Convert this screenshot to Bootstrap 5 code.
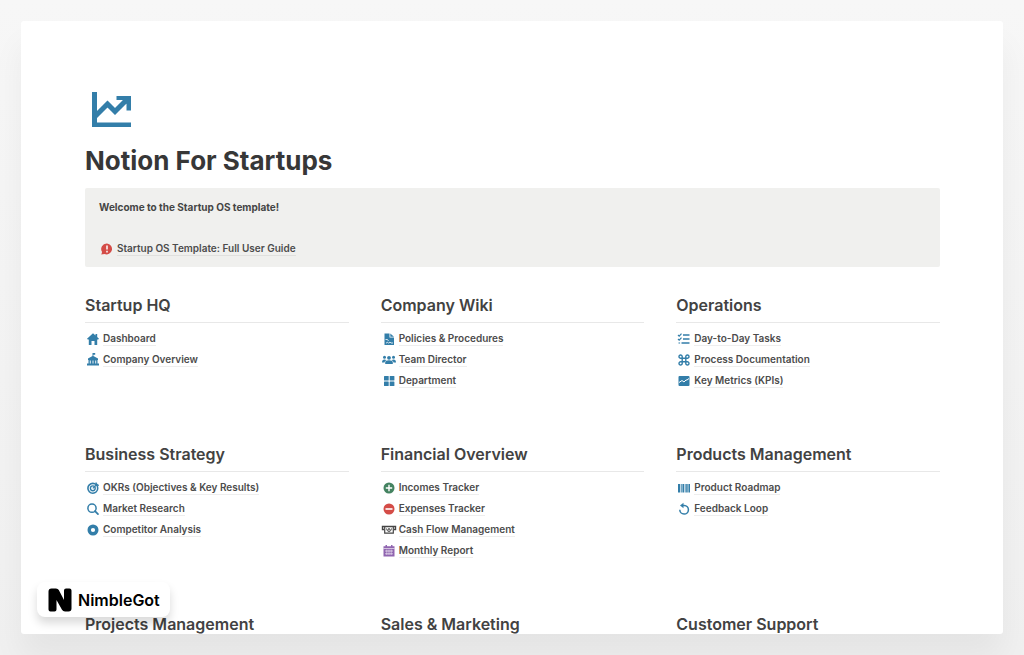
<!DOCTYPE html>
<html lang="en">
<head>
<meta charset="utf-8">
<meta name="viewport" content="width=device-width, initial-scale=1">
<title>Notion For Startups</title>
<link href="https://cdn.jsdelivr.net/npm/bootstrap@5.3.0/dist/css/bootstrap.min.css" rel="stylesheet">
<style>
  body { font-family: Inter, "Liberation Sans", sans-serif; color: #373737; background: linear-gradient(#f7f7f7, #f0f0f0); padding: 21px; }
  .sheet { border-radius: 3px; padding: 64px 63px 0 64px; box-shadow: 0 24px 32px rgba(0,0,0,.05); min-height: 0; }
  .page-icon { width: 48px; height: 48px; margin-bottom: 10px; }
  .page-title { font-size: 26px; line-height: 36px; font-weight: 700; margin-bottom: 9px; }
  .callout { background: #f0f0ee; padding: 9px 14px 8px; margin-bottom: 26px; border-radius: 2px; }
  .callout p { font-size: 10px; line-height: 21px; font-weight: 700; margin-bottom: 20px; color: #454545; }
  .sections { --bs-gutter-x: 32px; row-gap: 51px; }
  .section-title { font-size: 16px; line-height: 24px; font-weight: 600; color: #424242; padding-bottom: 5px; margin-bottom: 5px; border-bottom: 1px solid #e8e8e8; }
  .page-link-row { height: 21px; font-size: 10px; line-height: 14px; font-weight: 600; gap: 2px; }
  .page-link-row a { color: #4c4c4c; text-decoration: none; border-bottom: 1px solid #eeeeee; }
  .callout .page-link-row a { border-color: #e0e0de; }
  .page-link-row svg { width: 16px; height: 14px; color: #337ea9; }
  .brand-tag { left: 37px; bottom: 38px; height: 35px; padding: 0 10px 0 11px; gap: 6px; border-radius: 8px; color: #000; font-size: 16px; line-height: 24px; font-weight: 600; box-shadow: 0 6px 10px rgba(0,0,0,.15); }
  .brand-tag svg { width: 24px; height: 24px; }
</style>
</head>
<body class="vh-100 overflow-hidden d-flex flex-column">
<main class="sheet bg-white flex-fill overflow-hidden">
  <svg class="page-icon d-block" viewBox="0 0 48 48" fill="#337ea9" aria-hidden="true">
    <path d="M7 7h5v30.500h34V42H7z"/>
    <path d="M9.500 32 22.500 19 30 26.500 43 13.500" fill="none" stroke="#337ea9" stroke-width="5"/>
    <path d="M31.500 11H46v14.500h-4.500V19l-4-4h-6z"/>
  </svg>
  <h1 class="page-title">Notion For Startups</h1>
  <div class="callout">
    <p>Welcome to the Startup OS template!</p>
    <div class="page-link-row d-flex align-items-center">
      <svg viewBox="0 0 16 14"><path d="M8 1.500a5.500 5.500 0 1 1-2.500 10.600L2.300 12.600l.8-2.600A5.500 5.500 0 0 1 8 1.500z" fill="#d44c47"/><path d="M8 3.500v4M8 8.800v1.600" stroke="#fff" stroke-width="1.500"/></svg>
      <a href="#">Startup OS Template: Full User Guide</a>
    </div>
  </div>
  <div class="sections row row-cols-3">
    <section>
      <h2 class="section-title">Startup HQ</h2>
      <ul class="list-unstyled mb-0">
        <li class="page-link-row d-flex align-items-center"><svg viewBox="0 0 16 14" fill="currentColor"><path d="M8 1.300 10.500 3.500V2h1.700v3L14 6.700l-.8.900h-1V13H9.500V9h-3v4H3.800V7.600h-1L2 6.700z"/></svg><a href="#">Dashboard</a></li>
        <li class="page-link-row d-flex align-items-center"><svg viewBox="0 0 16 14" fill="currentColor"><path d="M7.500 0h2.700v1.700H8.400v1.200l4.600 2.600V7h-.5v3.500H14v2H2v-2h1.500V7H3V5.500l4.500-2.600z"/><path d="M5.300 7.500v3M8 7.500v3M10.700 7.500v3" stroke="#fff" stroke-width=".9"/></svg><a href="#">Company Overview</a></li>
      </ul>
    </section>
    <section>
      <h2 class="section-title">Company Wiki</h2>
      <ul class="list-unstyled mb-0">
        <li class="page-link-row d-flex align-items-center"><svg viewBox="0 0 16 14" fill="currentColor"><path d="M3.500 1.500h5v4H13V13H3.500z"/><path d="M9.300 1.500 13 4.800H9.300z"/><path d="M4.500 7.500h2l1 1.500M5 11.200l1.500-1 1 1 1.500-1.200 1 1h2" fill="none" stroke="#fff" stroke-width=".8"/></svg><a href="#">Policies &amp; Procedures</a></li>
        <li class="page-link-row d-flex align-items-center"><svg viewBox="0 0 16 14" fill="currentColor"><circle cx="3.500" cy="4.300" r="1.500"/><circle cx="12.500" cy="4.300" r="1.500"/><circle cx="8" cy="4.800" r="1.900"/><path d="M4.200 11V9.500Q4.200 7.300 8 7.300t3.800 2.200V11zM1 9.500Q1 6.600 3.500 6.600q1.200 0 1.700.6-1.600.8-1.700 2.300zM15 9.500q0-2.900-2.500-2.900-1.200 0-1.700.6 1.600.8 1.700 2.300z"/></svg><a href="#">Team Director</a></li>
        <li class="page-link-row d-flex align-items-center"><svg viewBox="0 0 16 14" fill="currentColor"><rect x="3" y="2" width="4.700" height="4.500" rx=".5"/><rect x="8.700" y="2" width="4.700" height="4.500" rx=".5"/><rect x="3" y="7.500" width="4.700" height="4.500" rx=".5"/><rect x="8.700" y="7.500" width="4.700" height="4.500" rx=".5"/></svg><a href="#">Department</a></li>
      </ul>
    </section>
    <section>
      <h2 class="section-title">Operations</h2>
      <ul class="list-unstyled mb-0">
        <li class="page-link-row d-flex align-items-center"><svg viewBox="0 0 16 14" fill="none" stroke="currentColor"><path d="M7 3h6.500M7 7h6.500M5.500 11h8" stroke-width="1.400"/><path d="m2 3 1.200 1.200 2.300-2.600M2 7l1.200 1.200 2.300-2.600M2.500 11h1.600" stroke-width="1.200"/></svg><a href="#">Day-to-Day Tasks</a></li>
        <li class="page-link-row d-flex align-items-center"><svg viewBox="0 0 16 14" fill="none" stroke="currentColor" stroke-width="1.400"><path d="M6.200 5.200h3.600v3.600H6.200zM6.200 5.200H4.700a1.600 1.600 0 1 1 1.500-1.600zM9.800 5.200h1.500a1.600 1.600 0 1 0-1.500-1.600zM6.200 8.800H4.700a1.600 1.600 0 1 0 1.500 1.600zM9.800 8.800h1.500a1.600 1.600 0 1 1-1.500 1.600z"/></svg><a href="#">Process Documentation</a></li>
        <li class="page-link-row d-flex align-items-center"><svg viewBox="0 0 16 14"><rect x="2.500" y="2" width="11" height="10" rx="1" fill="currentColor"/><path d="m3 8.500 3-2 2 1.500 2-2h1l2-1.500" fill="none" stroke="#fff"/></svg><a href="#">Key Metrics (KPIs)</a></li>
      </ul>
    </section>
    <section>
      <h2 class="section-title">Business Strategy</h2>
      <ul class="list-unstyled mb-0">
        <li class="page-link-row d-flex align-items-center"><svg viewBox="0 0 16 14" fill="none" stroke="currentColor"><circle cx="7.800" cy="7.300" r="4.900" stroke-width="1.600"/><circle cx="7.800" cy="7.300" r="2.400" stroke-width="1.400"/><path d="m7.800 7.300 4-4" stroke-width="1.200"/><path d="m11 1.500.3 2.500 2.500.3" fill="currentColor" stroke-width="1.200"/></svg><a href="#">OKRs (Objectives &amp; Key Results)</a></li>
        <li class="page-link-row d-flex align-items-center"><svg viewBox="0 0 16 14" fill="none" stroke="currentColor"><circle cx="7" cy="6.200" r="4.100" stroke-width="1.500"/><path d="m10 9.200 3 3" stroke-width="1.700" stroke-linecap="round"/></svg><a href="#">Market Research</a></li>
        <li class="page-link-row d-flex align-items-center"><svg viewBox="0 0 16 14" fill="none" stroke="currentColor"><circle cx="8" cy="7" r="3.800" stroke-width="3.400"/></svg><a href="#">Competitor Analysis</a></li>
      </ul>
    </section>
    <section>
      <h2 class="section-title">Financial Overview</h2>
      <ul class="list-unstyled mb-0">
        <li class="page-link-row d-flex align-items-center"><svg viewBox="0 0 16 14"><circle cx="8" cy="7" r="5.500" fill="#448361"/><path d="M4.800 7h6.400M8 3.800v6.400" stroke="#fff" stroke-width="1.400"/></svg><a href="#">Incomes Tracker</a></li>
        <li class="page-link-row d-flex align-items-center"><svg viewBox="0 0 16 14"><circle cx="8" cy="7" r="5.500" fill="#d44c47"/><path d="M4.500 7h7" stroke="#fff" stroke-width="1.600"/></svg><a href="#">Expenses Tracker</a></li>
        <li class="page-link-row d-flex align-items-center"><svg viewBox="0 0 16 14" fill="none" stroke="#454545"><path d="M3 6.500H1.500v-3h13v3H13" stroke-width="1.400"/><path d="M3.700 4v6.200h8.600V4" stroke-width="1.200"/><path d="M5.500 5.500Q6 8.500 8 8.500t2.500-3"/><circle cx="8" cy="6.300" r=".8"/></svg><a href="#">Cash Flow Management</a></li>
        <li class="page-link-row d-flex align-items-center"><svg viewBox="0 0 16 14"><path d="M4.500 1h1.500v1.200h4V1h1.500v1.200h2V12.500h-11V2.200h2z" fill="#9065b0"/><path d="M2.500 4.500h11M4 7h8M4 9.800h8" stroke="#fff" stroke-width=".6"/><path d="M5.800 5.500v5.500M8 5.500v5.500M10.200 5.500v5.500" stroke="#fff" stroke-width=".5"/></svg><a href="#">Monthly Report</a></li>
      </ul>
    </section>
    <section>
      <h2 class="section-title">Products Management</h2>
      <ul class="list-unstyled mb-0">
        <li class="page-link-row d-flex align-items-center"><svg viewBox="0 0 16 14" fill="currentColor"><path d="M2 3h2v8.500H2zM4.700 3h1v8.500h-1zM6.400 3h1.600v8.500H6.400zM8.700 3h.9v8.500h-.9zM10.200 3h1.500v8.500h-1.500zM12.400 3H14v8.500h-1.600z"/></svg><a href="#">Product Roadmap</a></li>
        <li class="page-link-row d-flex align-items-center"><svg viewBox="0 0 16 14"><path d="M6.500 3.500h1.800a4.300 4.300 0 1 1-4.500 4.300" fill="none" stroke="currentColor" stroke-width="1.500"/><path d="M7.500.8v5.400L4 3.500z" fill="currentColor"/></svg><a href="#">Feedback Loop</a></li>
      </ul>
    </section>
    <section><h2 class="section-title">Projects Management</h2></section>
    <section><h2 class="section-title">Sales &amp; Marketing</h2></section>
    <section><h2 class="section-title">Customer Support</h2></section>
  </div>
</main>
<div class="brand-tag position-absolute bg-white d-flex align-items-center">
  <svg viewBox="0 0 24 24" aria-hidden="true"><path d="M3.500.5H8q2 0 2.800 1.500L16 12V2.500q0-2 2-2h3.500q2 0 2 2v18q0 3-3 3H17q-2 0-3-1.700L8.500 12v9.500q0 2-2 2h-4q-2 0-2-2v-18q0-3 3-3z"/></svg>
  <span>NimbleGot</span>
</div>
<script src="https://cdn.jsdelivr.net/npm/bootstrap@5.3.0/dist/js/bootstrap.bundle.min.js"></script>
</body>
</html>
